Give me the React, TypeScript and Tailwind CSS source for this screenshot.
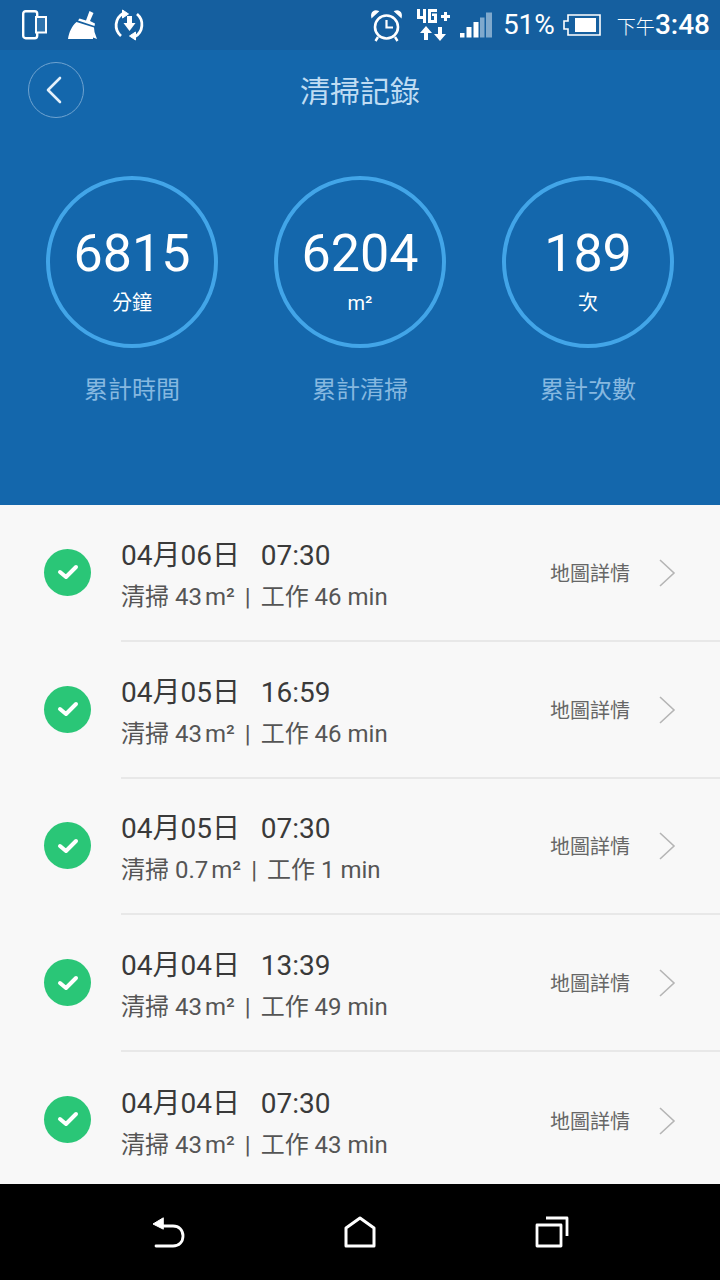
import React from "react";

const font = { fontFamily: '"Roboto","Noto Sans CJK TC",sans-serif' };

const stats = [
  { value: "6815", unit: "分鐘", label: "累計時間" },
  { value: "6204", unit: "m²", label: "累計清掃" },
  { value: "189", unit: "次", label: "累計次數" },
];

const rows = [
  { date: "04月06日", time: "07:30", area: "43", work: "46" },
  { date: "04月05日", time: "16:59", area: "43", work: "46" },
  { date: "04月05日", time: "07:30", area: "0.7", work: "1" },
  { date: "04月04日", time: "13:39", area: "43", work: "49" },
  { date: "04月04日", time: "07:30", area: "43", work: "43" },
];

function StatusBar() {
  return (
    <div className="h-[50px] bg-[#155f9f] flex items-center text-white pl-[20px] pr-[10px]">
      <svg width="28" height="32" viewBox="0 0 28 32" fill="none" stroke="white" className="mr-[18px]">
        <rect x="3.2" y="2.2" width="14" height="27" rx="2.5" strokeWidth="2.4" />
        <rect x="16" y="8" width="10" height="15.5" fill="#2f74ae" strokeWidth="2" />
      </svg>
      <svg width="32" height="32" viewBox="0 0 32 32" fill="white" className="mr-[15px]">
        <path d="M23.5 2 L27.5 4 L24 12 L29 14.5 L28.5 17 L12 11.5 L13.5 9.5 L20 11.5 Z" />
        <path d="M10.5 13 L28 18.5 L28.5 23 L31 30 L27 28.5 L27 30 L2 30 C3 23 6 17 10.5 13 Z" />
      </svg>
      <svg width="32" height="32" viewBox="0 0 32 32" fill="none" stroke="white" strokeWidth="2.8">
        <path d="M8 27 A13.8 13.8 0 0 1 10 4.5" />
        <path d="M24 5 A13.8 13.8 0 0 1 22 27.5" />
        <path d="M9.5 1 L15.5 5 L9.5 9 Z" fill="white" strokeWidth="1" />
        <path d="M22.5 31 L16.5 27 L22.5 23 Z" fill="white" strokeWidth="1" />
        <path d="M14 7 h5 v7 h3.5 l-6 8 l-6 -8 h3.5 Z" fill="white" stroke="none" />
      </svg>
      <div className="flex-1" />
      <svg width="34" height="34" viewBox="0 0 34 34" fill="none" stroke="white" className="mr-[12px]">
        <circle cx="17.5" cy="19" r="11.5" strokeWidth="2.6" />
        <path d="M17.5 12 V19.5 H24" strokeWidth="2.2" />
        <path d="M3 9 L9 3.5 C6 2 2 4 3 9 Z M32 9 L26 3.5 C29 2 33 4 32 9 Z" fill="white" strokeWidth="1.5" />
        <path d="M9 29 L6.5 33 M26 29 L28.5 33" strokeWidth="2.4" />
      </svg>
      <svg width="36" height="34" viewBox="0 0 36 34" fill="white" className="mr-[9px]">
        <path d="M2 1 h3 v7 h3 v-7 h3 v14 h-3 v-4 h-6 Z" />
        <path d="M13 1 h9 v3 h-6 v8 h3 v-4 h-2 v-2.5 h5 V15 h-9 Z" />
        <path d="M26 7 h3 v-3 h3 v3 h3 v3 h-3 v3 h-3 v-3 h-3 Z" />
        <path d="M11 18 l6 7 h-4 v7 h-4 v-7 h-4 Z" />
        <path d="M25 33 l-6 -7 h4 v-7 h4 v7 h4 Z" />
      </svg>
      <svg width="32" height="26" viewBox="0 0 32 26" className="mr-[11px]">
        <rect x="0" y="21" width="4.5" height="4.5" fill="white" />
        <rect x="6.5" y="15" width="5" height="10.5" fill="white" />
        <rect x="13.5" y="10" width="5" height="15.5" fill="white" />
        <rect x="20" y="5.5" width="4.5" height="20" fill="#7fa9cd" />
        <rect x="26" y="0.5" width="6" height="25" fill="#7fa9cd" />
      </svg>
      <span className="text-[28px] leading-none mr-[8px]" style={font}>51%</span>
      <svg width="38" height="22" viewBox="0 0 38 22" fill="none" stroke="white" className="mr-[16px]">
        <path d="M5 1 H37 V21 H5 V15 H1 V7 H5 Z" strokeWidth="1.6" />
        <rect x="12" y="4" width="21" height="14" fill="white" stroke="none" />
      </svg>
      <span className="text-[19px] leading-none font-light mt-[5px]" style={font}>下午</span>
      <span className="text-[28px] leading-none font-medium" style={font}>3:48</span>
    </div>
  );
}

function Hero() {
  return (
    <div className="h-[455px] bg-[#1467ac] flex flex-col">
      <div className="relative h-[82px] flex items-center justify-center">
        <button className="absolute left-[28px] top-[12px] w-[56px] h-[56px] rounded-full border border-[#6fa3d0] flex items-center justify-center">
          <svg width="20" height="30" viewBox="0 0 20 30" fill="none" stroke="#e3f0fa" strokeWidth="2.6" strokeLinecap="round" strokeLinejoin="round" className="-ml-[4px]">
            <path d="M16 3 L4 15 L16 27" />
          </svg>
        </button>
        <span className="text-[30px] leading-none text-[#bfdcf3] mt-[2px]" style={font}>清掃記錄</span>
      </div>
      <div className="flex justify-center gap-[56px] mt-[44px]">
        {stats.map((s) => (
          <div key={s.label} className="w-[172px] flex flex-col items-center">
            <div className="w-[172px] h-[172px] rounded-full border-[4px] border-[#42a5e8] flex flex-col items-center text-white">
              <span className="text-[52px] leading-none mt-[48px]" style={font}>{s.value}</span>
              <span className="text-[20px] leading-none mt-[13px]" style={font}>{s.unit}</span>
            </div>
            <span className="text-[24px] leading-none text-[#86b8e0] mt-[30px]" style={font}>{s.label}</span>
          </div>
        ))}
      </div>
    </div>
  );
}

function Row({ r, last }: { r: (typeof rows)[number]; last: boolean }) {
  return (
    <div className="h-[136.75px] flex pl-[44px]">
      <div className="w-[47px] h-full flex items-center mr-[30px]">
        <div className="w-[47px] h-[47px] rounded-full bg-[#2ac677] flex items-center justify-center -mt-[2px]">
          <svg width="24" height="20" viewBox="0 0 24 20" fill="none" stroke="white" strokeWidth="4" strokeLinecap="round" strokeLinejoin="round">
            <path d="M4 10 L10 15 L20 5" />
          </svg>
        </div>
      </div>
      <div className={`flex-1 flex items-center ${last ? "" : "border-b-2 border-[#e8e8e8]"}`}>
        <div className="flex-1 flex flex-col pt-[6px]" style={font}>
          <div className="text-[28px] leading-none text-[#3a3a3a] whitespace-pre">{`${r.date}   ${r.time}`}</div>
          <div className="text-[24px] leading-none text-[#555555] mt-[15px] flex items-baseline whitespace-pre">
            <span>{`清掃 ${r.area}`}</span>
            <span className="ml-[3px]">m²</span>
            <span className="mx-[10px]">|</span>
            <span>{`工作 ${r.work} min`}</span>
          </div>
        </div>
        <span className="text-[20px] leading-none text-[#666666] mr-[28px] mt-[3px]" style={font}>地圖詳情</span>
        <svg width="18" height="30" viewBox="0 0 18 30" fill="none" stroke="#b5b5b5" strokeWidth="1.6" className="mr-[44px] mt-[1px]">
          <path d="M2 2 L16 15 L2 28" />
        </svg>
      </div>
    </div>
  );
}

function NavBar() {
  return (
    <div className="h-[96px] bg-black flex items-center justify-center gap-[157px]">
      <svg width="36" height="32" viewBox="0 0 36 32" fill="none" stroke="white" strokeWidth="2.8" strokeLinecap="round" strokeLinejoin="round">
        <path d="M5 30 H22 C28 30 32 26 32 20 C32 14 28 10 22 10 H10" />
        <path d="M12 2 L2 8 L12 13 Z" fill="white" strokeWidth="1" />
      </svg>
      <svg width="32" height="32" viewBox="0 0 32 32" fill="none" stroke="white" strokeWidth="3" strokeLinejoin="round">
        <path d="M2 12 L16 2 L30 12 V30 H2 Z" />
      </svg>
      <svg width="36" height="32" viewBox="0 0 36 32" fill="none" stroke="white" strokeWidth="2.8" strokeLinejoin="round">
        <rect x="4" y="9" width="24" height="21" />
        <path d="M13 2 H34 V20" />
      </svg>
    </div>
  );
}

export default function App() {
  return (
    <div className="w-[720px] h-[1280px] flex flex-col overflow-hidden bg-[#f8f8f8]">
      <StatusBar />
      <Hero />
      <div className="h-[679px] overflow-hidden">
        {rows.map((r, i) => (
          <Row key={i} r={r} last={i === rows.length - 1} />
        ))}
      </div>
      <NavBar />
    </div>
  );
}
